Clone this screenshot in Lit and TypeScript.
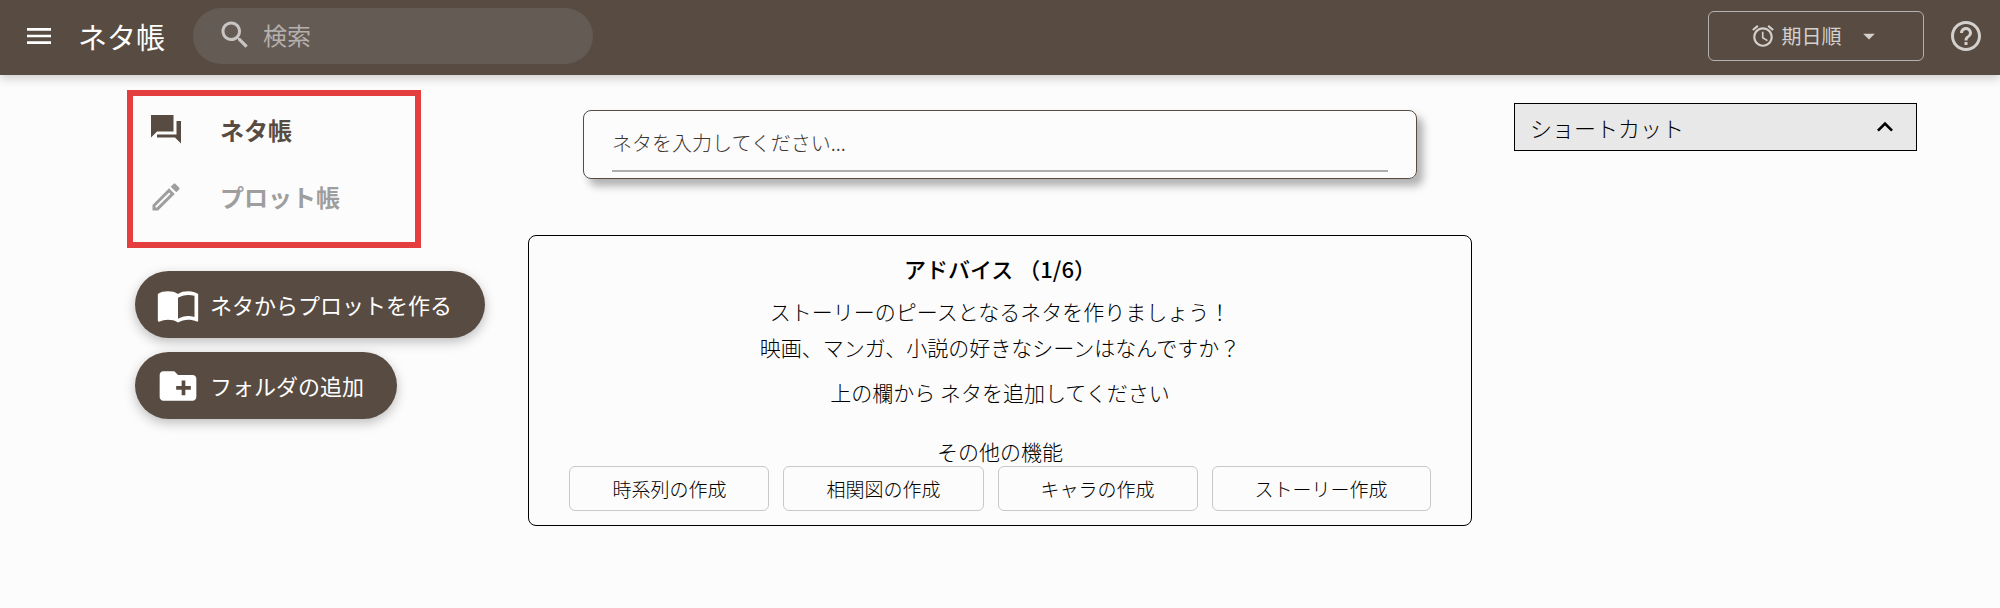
import { LitElement, html, css, svg } from "lit";
import { customElement, state } from "lit/decorators.js";

const icon = (path: string, cls = "") => html`
  <svg class="icon ${cls}" viewBox="0 0 24 24" aria-hidden="true">${svg`<path d=${path}></path>`}</svg>
`;

const MENU = "M3 18h18v-2H3v2zm0-5h18v-2H3v2zm0-7v2h18V6H3z";
const SEARCH =
  "M15.5 14h-.79l-.28-.27C15.41 12.59 16 11.11 16 9.5 16 5.91 13.09 3 9.5 3S3 5.91 3 9.5 5.91 16 9.5 16c1.61 0 3.09-.59 4.23-1.57l.27.28v.79l5 4.99L20.49 19l-4.99-5zm-6 0C7.01 14 5 11.99 5 9.5S7.01 5 9.5 5 14 7.01 14 9.5 11.99 14 9.5 14z";
const ALARM =
  "M22 5.72l-4.6-3.86-1.29 1.53 4.6 3.86L22 5.72zM7.88 3.39L6.6 1.86 2 5.71l1.29 1.53 4.59-3.85zM12.5 8H11v6l4.75 2.85.75-1.23-4-2.37V8zM12 4c-4.97 0-9 4.03-9 9s4.02 9 9 9c4.97 0 9-4.03 9-9s-4.03-9-9-9zm0 16c-3.87 0-7-3.13-7-7s3.13-7 7-7 7 3.13 7 7-3.13 7-7 7z";
const CARET = "M7 10l5 5 5-5z";
const HELP =
  "M11 18h2v-2h-2v2zm1-16C6.48 2 2 6.48 2 12s4.48 10 10 10 10-4.48 10-10S17.52 2 12 2zm0 18c-4.41 0-8-3.59-8-8s3.59-8 8-8 8 3.59 8 8-3.59 8-8 8zm0-14c-2.21 0-4 1.79-4 4h2c0-1.1.9-2 2-2s2 .9 2 2c0 2-3 1.75-3 5h2c0-2.25 3-2.5 3-5 0-2.21-1.79-4-4-4z";
const FORUM =
  "M22 6h-3v9H6v2h12l4 4V6zM17 13V2H2v15l4-4h11z";
const PENCIL =
  "M14.06 9.02l.92.92L5.92 19H5v-.92l9.06-9.06M17.66 3c-.25 0-.51.1-.7.29l-1.83 1.83 3.75 3.75 1.83-1.83c.39-.39.39-1.02 0-1.41l-2.34-2.34c-.2-.2-.45-.29-.71-.29zm-3.6 3.19L3 17.25V21h3.75L17.81 9.94l-3.75-3.75z";
const BOOK =
  "M21 5c-1.11-.35-2.33-.5-3.5-.5-1.95 0-4.05.4-5.5 1.5-1.45-1.1-3.55-1.5-5.5-1.5S2.45 4.9 1 6v14.65c0 .25.25.5.5.5.1 0 .15-.05.25-.05C3.1 20.45 5.05 20 6.5 20c1.95 0 4.05.4 5.5 1.5 1.35-.85 3.8-1.5 5.5-1.5 1.65 0 3.35.3 4.75 1.05.1.05.15.05.25.05.25 0 .5-.25.5-.5V6c-.6-.45-1.25-.75-2-1zm0 13.5c-1.1-.35-2.3-.5-3.5-.5-1.7 0-4.15.65-5.5 1.5V8c1.35-.85 3.8-1.5 5.5-1.5 1.2 0 2.4.15 3.5.5v11.5z";
const FOLDER =
  "M20 6h-8l-2-2H4c-1.11 0-1.99.89-1.99 2L2 18c0 1.11.89 2 2 2h16c1.11 0 2-.89 2-2V8c0-1.11-.89-2-2-2zm-1 8h-3v3h-2v-3h-3v-2h3V9h2v3h3v2z";
const CHEVRON_UP = "M12 8l-6 6 1.41 1.41L12 10.83l4.59 4.58L18 14z";

@customElement("app-root")
export class AppRoot extends LitElement {
  static styles = css`
    :host {
      display: block;
      min-height: 100vh;
      background: #fcfcfc;
      color: #000;
      font-family: "Noto Sans CJK JP", "Noto Sans", sans-serif;
      font-size: 21px;
      font-weight: 300;
    }
    * {
      box-sizing: border-box;
    }
    button,
    input,
    select {
      font: inherit;
      color: inherit;
      background: none;
      border: 0;
      padding: 0;
      margin: 0;
      outline: none;
    }
    button,
    select {
      cursor: pointer;
    }
    a {
      color: inherit;
      text-decoration: none;
    }
    h1,
    h2,
    p {
      margin: 0;
    }
    .icon {
      display: block;
      flex: none;
      width: 36px;
      height: 36px;
      fill: currentColor;
    }
    .icon.s28 {
      width: 28px;
      height: 28px;
    }
    .icon.s32 {
      width: 32px;
      height: 32px;
    }
    .icon.s44 {
      width: 44px;
      height: 44px;
    }

    .bar {
      display: flex;
      align-items: center;
      height: 75px;
      padding: 0 16px 3px 23px;
      background: #584c42;
      color: #fff;
      box-shadow: 0 3px 10px rgba(0, 0, 0, 0.2);
    }
    .bar h1 {
      margin: 0 28px 0 23px;
      font-size: 29px;
      font-weight: 400;
      line-height: 40px;
      white-space: nowrap;
    }
    .search {
      display: flex;
      align-items: center;
      gap: 10px;
      flex: 0 1 400px;
      height: 56px;
      padding: 0 24px 2px;
      border-radius: 28px;
      background: #655b55;
      color: #c9c5c2;
      font-size: 24px;
      font-weight: 400;
    }
    .search input {
      flex: 1;
      min-width: 0;
      line-height: 32px;
    }
    .search input::placeholder {
      color: #b5b0ad;
      opacity: 1;
    }
    .tools {
      display: flex;
      align-items: center;
      gap: 24px;
      margin-left: auto;
      color: #d3d0ce;
    }
    .sort {
      display: flex;
      align-items: center;
      justify-content: center;
      width: 216px;
      height: 50px;
      border: 1px solid #b5b0ab;
      border-radius: 6px;
      font-size: 20px;
      font-weight: 400;
    }
    .sort .icon:first-child {
      width: 26px;
      height: 26px;
    }
    .sort select {
      appearance: none;
      margin: 0 13px 0 6px;
      line-height: 30px;
    }
    .sort option {
      color: #1c1a19;
    }

    .page {
      display: grid;
      grid-template-columns: minmax(0, 1fr) minmax(0, 944px) minmax(0, 1fr);
      align-items: start;
    }
    .side {
      padding: 15px 40px 0 127px;
    }
    .nav {
      display: flex;
      flex-direction: column;
      max-width: 294px;
      padding-bottom: 12px;
      border: 6px solid #e53e3e;
      color: #9e9e9e;
      font-size: 24px;
      font-weight: 700;
    }
    .nav a {
      display: flex;
      align-items: center;
      gap: 36px;
      height: 67px;
      padding-left: 15px;
      white-space: nowrap;
    }
    .nav a.on {
      color: #584c42;
    }
    .actions {
      display: flex;
      flex-direction: column;
      align-items: flex-start;
      gap: 14px;
      margin: 23px 0 0 8px;
    }
    .pill {
      display: flex;
      align-items: center;
      gap: 10px;
      height: 67px;
      padding: 0 33px 0 21px;
      border-radius: 34px;
      background: #584c42;
      color: #fff;
      font-size: 22px;
      font-weight: 400;
      white-space: nowrap;
      box-shadow: 0 4px 12px rgba(0, 0, 0, 0.25);
    }
    .pill span {
      padding-bottom: 2px;
    }

    .main {
      padding-top: 35px;
    }
    .entry {
      margin: 0 55px 56px;
      padding: 8px 28px 7px;
      height: 69px;
      border: 1px solid #584c42;
      border-radius: 8px;
      box-shadow: 6px 7px 9px rgba(0, 0, 0, 0.3);
    }
    .entry input {
      display: block;
      width: 100%;
      height: 53px;
      padding-bottom: 5px;
      border-bottom: 2px solid #adadad;
      font-size: 20px;
    }
    .entry input::placeholder {
      color: #3c3632;
      opacity: 1;
    }
    .advice {
      display: flex;
      flex-direction: column;
      align-items: center;
      padding: 14px 24px;
      border: 1px solid #000;
      border-radius: 8px;
      line-height: 36px;
      text-align: center;
    }
    .advice h2 {
      margin-bottom: 7px;
      font-size: 22px;
      font-weight: 500;
    }
    .call {
      margin: 9px 0 26px;
    }
    .more {
      line-height: 30px;
    }
    .chips {
      display: flex;
      flex-wrap: wrap;
      justify-content: center;
      gap: 14px;
    }
    .chip {
      height: 45px;
      padding: 0 42px;
      border: 1px solid #c8c8c8;
      border-radius: 6px;
      font-size: 19px;
      white-space: nowrap;
    }

    .right {
      padding: 28px 83px 0 42px;
    }
    .short {
      display: flex;
      align-items: center;
      justify-content: space-between;
      width: 100%;
      height: 48px;
      padding: 0 15px;
      border: 1px solid #000;
      background: #e8e8e8;
      font-size: 22px;
    }

    @media (max-width: 1500px) {
      .page {
        grid-template-columns: minmax(0, 1fr);
        gap: 24px;
      }
      .side,
      .right,
      .main {
        padding: 16px 24px 0;
      }
      .entry {
        margin-left: 0;
        margin-right: 0;
      }
    }
  `;

  @state() private section = 0;

  private sections = [
    { label: "ネタ帳", glyph: FORUM },
    { label: "プロット帳", glyph: PENCIL },
  ];

  private features = ["時系列の作成", "相関図の作成", "キャラの作成", "ストーリー作成"];

  private pick(e: Event, i: number) {
    e.preventDefault();
    this.section = i;
  }

  render() {
    return html`
      <header class="bar">
        <button aria-label="メニュー">${icon(MENU, "s32")}</button>
        <h1>ネタ帳</h1>
        <label class="search">
          ${icon(SEARCH)}
          <input type="text" placeholder="検索" aria-label="検索" />
        </label>
        <div class="tools">
          <label class="sort">
            ${icon(ALARM)}
            <select aria-label="並び順">
              <option>期日順</option>
            </select>
            ${icon(CARET, "s28")}
          </label>
          <button aria-label="ヘルプ">${icon(HELP)}</button>
        </div>
      </header>
      <div class="page">
        <aside class="side">
          <nav class="nav">
            ${this.sections.map(
              (s, i) => html`
                <a href="#" class=${i === this.section ? "on" : ""} @click=${(e: Event) => this.pick(e, i)}>
                  ${icon(s.glyph)}<span>${s.label}</span>
                </a>
              `
            )}
          </nav>
          <div class="actions">
            <button class="pill">${icon(BOOK, "s44")}<span>ネタからプロットを作る</span></button>
            <button class="pill">${icon(FOLDER, "s44")}<span>フォルダの追加</span></button>
          </div>
        </aside>
        <main class="main">
          <div class="entry">
            <input type="text" placeholder="ネタを入力してください..." aria-label="ネタ" />
          </div>
          <section class="advice">
            <h2>アドバイス （1/6）</h2>
            <p>ストーリーのピースとなるネタを作りましょう！</p>
            <p>映画、マンガ、小説の好きなシーンはなんですか？</p>
            <p class="call">上の欄から ネタを追加してください</p>
            <p class="more">その他の機能</p>
            <div class="chips">${this.features.map((f) => html`<button class="chip">${f}</button>`)}</div>
          </section>
        </main>
        <aside class="right">
          <button class="short"><span>ショートカット</span>${icon(CHEVRON_UP, "s32")}</button>
        </aside>
      </div>
    `;
  }
}
